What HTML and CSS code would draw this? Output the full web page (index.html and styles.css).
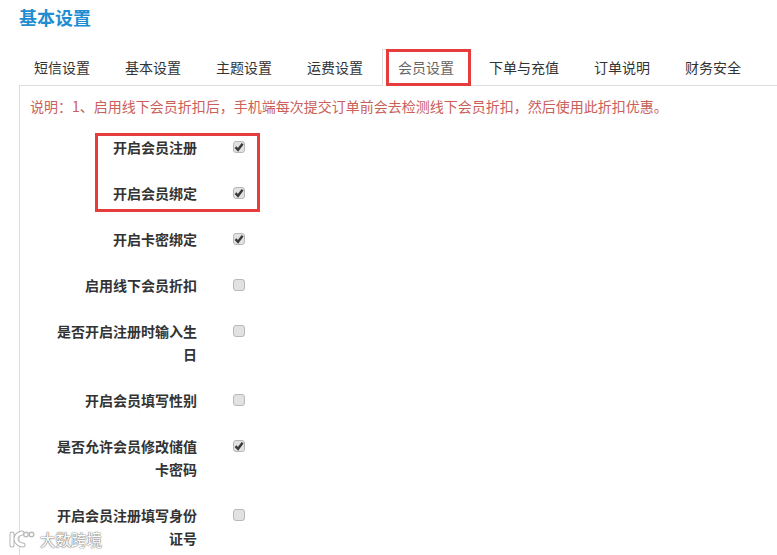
FILE: index.html
```html
<!DOCTYPE html>
<html lang="zh-CN">
<head>
    <meta charset="UTF-8">
    <meta name="viewport" content="width=device-width, initial-scale=1.0">
    <title>基本设置</title>
    <link rel="stylesheet" href="styles.css">
</head>
<body>
    <h1 class="page-title">基本设置</h1>

    <ul class="tabs">
        <li class="tab">短信设置</li>
        <li class="tab">基本设置</li>
        <li class="tab">主题设置</li>
        <li class="tab">运费设置</li>
        <li class="tab active">会员设置</li>
        <li class="tab">下单与充值</li>
        <li class="tab">订单说明</li>
        <li class="tab">财务安全</li>
    </ul>

    <div class="panel">
        <p class="note">说明&#xFF1A;1、启用线下会员折扣后&#xFF0C;手机端每次提交订单前会去检测线下会员折扣&#xFF0C;然后使用此折扣优惠。</p>

        <form class="settings">
            <div class="form-group">
                <label class="field-label" for="memberRegister">开启会员注册</label>
                <input type="checkbox" id="memberRegister" checked>
            </div>
            <div class="form-group">
                <label class="field-label" for="memberBind">开启会员绑定</label>
                <input type="checkbox" id="memberBind" checked>
            </div>
            <div class="form-group">
                <label class="field-label" for="cardBind">开启卡密绑定</label>
                <input type="checkbox" id="cardBind" checked>
            </div>
            <div class="form-group">
                <label class="field-label" for="offlineDiscount">启用线下会员折扣</label>
                <input type="checkbox" id="offlineDiscount">
            </div>
            <div class="form-group">
                <label class="field-label" for="birthday">是否开启注册时输入生日</label>
                <input type="checkbox" id="birthday">
            </div>
            <div class="form-group">
                <label class="field-label" for="gender">开启会员填写性别</label>
                <input type="checkbox" id="gender">
            </div>
            <div class="form-group">
                <label class="field-label" for="cardPassword">是否允许会员修改储值卡密码</label>
                <input type="checkbox" id="cardPassword" checked>
            </div>
            <div class="form-group">
                <label class="field-label" for="idNumber">开启会员注册填写身份证号</label>
                <input type="checkbox" id="idNumber">
            </div>
        </form>
    </div>

    <!-- red marks drawn over the screenshot -->
    <div class="mark mark-tab"></div>
    <div class="mark mark-rows"></div>

    <div class="watermark">
        <svg class="watermark-logo" width="32" height="22" viewBox="0 0 32 22" fill="none">
            <path d="M6 6v11M16 5c-4 1-6 3-6 6s3 6 7 6" stroke="#b4b4b4" stroke-width="5" stroke-linecap="round"/>
            <path d="M6 6v11M16 5c-4 1-6 3-6 6s3 6 7 6" stroke="#fff" stroke-width="3" stroke-linecap="round"/>
            <circle cx="20" cy="6.5" r="2.3" stroke="#bbb" stroke-width="1.4" fill="#fff"/>
            <circle cx="25.5" cy="6.5" r="2.3" stroke="#bbb" stroke-width="1.4" fill="#fff"/>
        </svg>
        <span class="watermark-text">大数跨境</span>
    </div>
</body>
</html>
```

FILE: styles.css
```css
html, body {
    height: 100%;
    overflow: hidden;
}

body {
    margin: 0;
    background-color: white;
    font-family: "Noto Sans CJK SC", "Liberation Sans", sans-serif;
    font-size: 14px;
    color: #333;
}

.page-title {
    margin: 0;
    padding: 5px 0 0 19px;
    height: 44px;
    font-size: 18px;
    line-height: 25px;
    font-weight: 700;
    color: #1f8dd0;
}

.tabs {
    display: flex;
    list-style: none;
    margin: 0;
    padding: 0 0 0 18px;
    height: 36px;
}

.tab {
    padding: 7px 15px 0;
    margin-right: 3px;
    line-height: 20px;
    height: 29px;
    border: 1px solid transparent;
    border-bottom: none;
    white-space: nowrap;
}

.tab.active {
    color: #666;
    background-color: white;
    border-color: #ddd;
}

.panel {
    margin-left: 19px;
    height: 600px;
    border-top: 1px solid #ddd;
    border-left: 1px solid #ddd;
}

.note {
    margin: 0;
    padding: 10px 0 0 10px;
    height: 30px;
    line-height: 20px;
    color: #c9605a;
    white-space: nowrap;
}

.settings {
    padding-top: 10px;
}

.form-group {
    display: flex;
    align-items: flex-start;
    margin-bottom: 23px;
}

.field-label {
    width: 140px;
    margin-left: 37px;
    text-align: right;
    font-weight: 700;
    line-height: 23px;
}

input[type="checkbox"] {
    appearance: none;
    width: 12px;
    height: 12px;
    margin: 5px 0 0 36px;
    border: 1px solid #b8b8b8;
    border-radius: 3px;
    background-color: #e2e2e2;
    box-sizing: border-box;
}

input[type="checkbox"]:checked {
    background-image: url("data:image/svg+xml,%3Csvg xmlns='http://www.w3.org/2000/svg' viewBox='0 0 10 10'%3E%3Cpath d='M1.5 5.2 4 7.8 8.6 1.8' fill='none' stroke='%233a3a3a' stroke-width='2.4'/%3E%3C/svg%3E");
    background-size: 10px 10px;
    background-position: center;
    background-repeat: no-repeat;
}

.mark {
    position: absolute;
    border: 3px solid #e53c3c;
    box-sizing: border-box;
}

.mark-tab {
    left: 386px;
    top: 49px;
    width: 85px;
    height: 37px;
}

.mark-rows {
    left: 95px;
    top: 133px;
    width: 165px;
    height: 79px;
}

.watermark {
    position: absolute;
    left: 6px;
    bottom: 5px;
    display: flex;
    align-items: center;
    gap: 2px;
}

.watermark-text {
    font-size: 15.5px;
    line-height: 22px;
    color: white;
    text-shadow: 0 0 1px #777, 0 0 1px #777, 0 0 2px #999;
}
```
